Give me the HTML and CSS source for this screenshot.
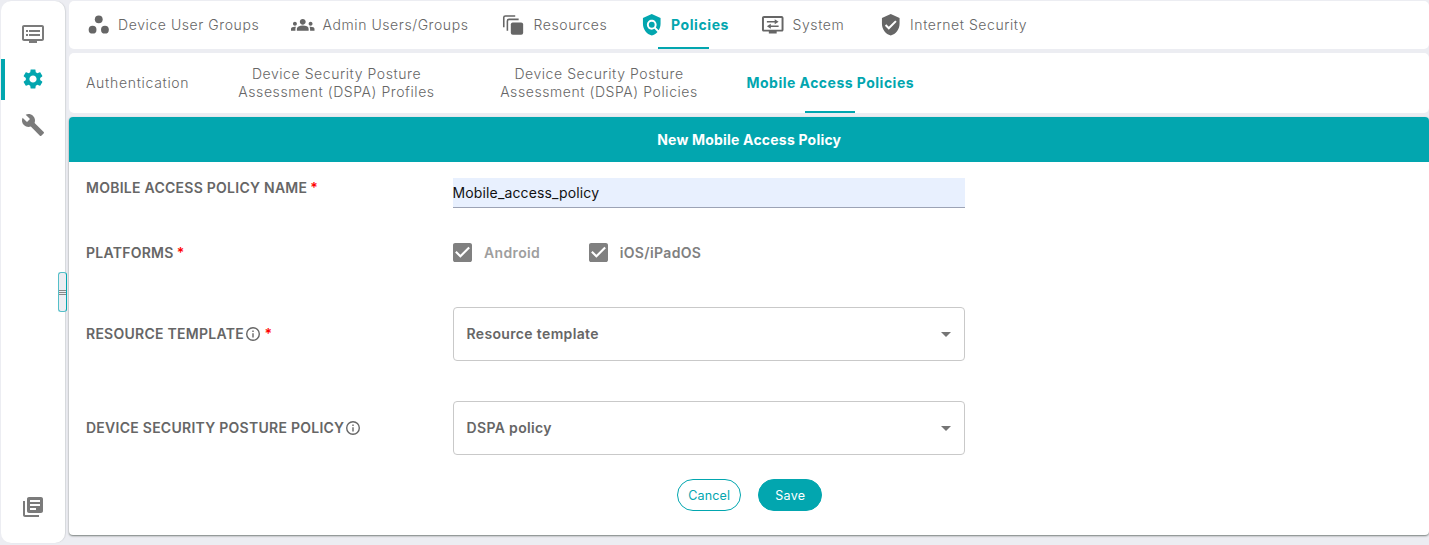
FILE: index.html
```html
<!DOCTYPE html>
<html lang="en">
<head>
<meta charset="utf-8">
<title>Mobile Access Policies</title>
<link rel="stylesheet" href="styles.css">
</head>
<body>
<div class="app">
  <nav class="sidebar">
    <a class="side-item"><svg class="side-icon" viewBox="0 0 24 24"><path d="M21 3H3c-1.1 0-2 .9-2 2v12c0 1.1.9 2 2 2h5v2h8v-2h5c1.1 0 2-.9 2-2V5c0-1.1-.9-2-2-2zm0 14H3V5h18v12zM19 8H8v2h11V8zm0 4H8v2h11v-2zM7 8H5v2h2V8zm0 4H5v2h2v-2z"/></svg></a>
    <a class="side-item side-active"><svg class="side-icon" viewBox="0 0 24 24"><path d="M19.14 12.94c.04-.3.06-.61.06-.94 0-.32-.02-.64-.07-.94l2.03-1.58c.18-.14.23-.41.12-.61l-1.92-3.32c-.12-.22-.37-.29-.59-.22l-2.39.96c-.5-.38-1.03-.7-1.62-.94l-.36-2.54c-.04-.24-.24-.41-.48-.41h-3.84c-.24 0-.43.17-.47.41l-.36 2.54c-.59.24-1.13.57-1.62.94l-2.39-.96c-.22-.08-.47 0-.59.22L2.74 8.87c-.12.21-.08.47.12.61l2.03 1.58c-.05.3-.09.63-.09.94s.02.64.07.94l-2.03 1.58c-.18.14-.23.41-.12.61l1.92 3.32c.12.22.37.29.59.22l2.39-.96c.5.38 1.03.7 1.62.94l.36 2.54c.05.24.24.41.48.41h3.84c.24 0 .44-.17.47-.41l.36-2.54c.59-.24 1.13-.56 1.62-.94l2.39.96c.22.08.47 0 .59-.22l1.92-3.32c.12-.22.07-.47-.12-.61l-2.01-1.58zM12 15.6c-1.98 0-3.6-1.62-3.6-3.6s1.62-3.6 3.6-3.6 3.6 1.62 3.6 3.6-1.62 3.6-3.6 3.6z"/></svg></a>
    <a class="side-item"><svg class="side-icon" viewBox="0 0 24 24"><path d="M22.7 19l-9.1-9.1c.9-2.3.4-5-1.5-6.9-2-2-5-2.4-7.4-1.3L9 6 6 9 1.6 4.7C.4 7.1.9 10.1 2.9 12.1c1.9 1.9 4.6 2.4 6.9 1.5l9.1 9.1c.4.4 1 .4 1.4 0l2.3-2.3c.5-.4.5-1.1.1-1.4z"/></svg></a>
    <a class="side-item side-bottom"><svg class="side-icon" viewBox="0 0 24 24"><path d="M4 6H2v14c0 1.1.9 2 2 2h14v-2H4V6zm16-4H8c-1.100 0-2 .9-2 2v12c0 1.100.9 2 2 2h12c1.100 0 2-.9 2-2V4c0-1.100-.9-2-2-2zm-1 9H9V9h10v2zm-4 4H9v-2h6v2zm4-8H9V5h10v2z"/></svg></a>
    <span class="grip"><i></i><i></i><i></i></span>
  </nav>
  <main class="main">
    <nav class="tabs">
      <a class="tab t1"><svg class="tab-icon" viewBox="0 0 24 24"><circle cx="12" cy="6.500" r="4"/><circle cx="5.700" cy="17" r="4"/><circle cx="18.300" cy="17" r="4"/></svg><span>Device User Groups</span></a>
      <a class="tab t2"><svg class="tab-icon" viewBox="0 0 24 24"><path d="M12 12.750c1.630 0 3.070.39 4.240.9 1.080.48 1.760 1.560 1.760 2.730V18H6v-1.610c0-1.180.68-2.260 1.760-2.730 1.170-.52 2.610-.91 4.240-.91zM4 13c1.100 0 2-.9 2-2s-.9-2-2-2-2 .9-2 2 .9 2 2 2zm1.130 1.100C4.760 14.040 4.390 14 4 14c-.99 0-1.930.21-2.780.58C.48 14.900 0 15.620 0 16.430V18h4.500v-1.610c0-.83.23-1.610.63-2.290zM20 13c1.100 0 2-.9 2-2s-.9-2-2-2-2 .9-2 2 .9 2 2 2zm4 3.430c0-.81-.48-1.530-1.220-1.850-.85-.37-1.790-.58-2.780-.58-.39 0-.76.04-1.130.1.400.68.630 1.460.630 2.290V18H24v-1.570zM12 6c1.660 0 3 1.340 3 3s-1.340 3-3 3-3-1.340-3-3 1.340-3 3-3z"/></svg><span>Admin Users/Groups</span></a>
      <a class="tab t3"><svg class="tab-icon" viewBox="0 0 24 24"><rect x="9" y="9.800" width="12.600" height="12.400" rx="2"/><path d="M5.500 18V8.200c0-1.100.7-1.700 1.700-1.700H17M1.800 14.500V4.700C1.800 3.600 2.500 3 3.500 3h10" fill="none" stroke="currentColor" stroke-width="1.600"/></svg><span>Resources</span></a>
      <a class="tab t4 tab-active"><svg class="tab-icon" viewBox="0 0 24 24"><path d="M21 5l-9-4-9 4v6c0 5.550 3.840 10.740 9 12 2.300-.56 4.330-1.900 5.880-3.710l-3.120-3.120c-1.940 1.290-4.580 1.070-6.290-.64-1.950-1.950-1.950-5.120 0-7.070s5.120-1.950 7.070 0c1.710 1.710 1.920 4.350.64 6.290l2.900 2.900C20.290 15.690 21 13.380 21 11V5z"/><circle cx="12" cy="12" r="3"/></svg><span>Policies</span></a>
      <a class="tab t5"><svg class="tab-icon" viewBox="0 0 24 24"><path d="M21 3H3c-1.100 0-2 .9-2 2v12c0 1.100.9 2 2 2h5v2h8v-2h5c1.100 0 2-.9 2-2V5c0-1.100-.9-2-2-2zm0 14H3V5h18v12zM6 8.250h8V6.500l4 2.500-4 2.500V9.750H6zM18 14.250h-8v1.750l-4-2.500 4-2.500v1.750h8z"/></svg><span>System</span></a>
      <a class="tab t6"><svg class="tab-icon" viewBox="0 0 24 24"><path d="M12 1L3 5v6c0 5.550 3.840 10.740 9 12 5.160-1.260 9-6.450 9-12V5l-9-4zm-2 16l-4-4 1.410-1.410L10 14.170l6.590-6.590L18 9l-8 8z"/></svg><span>Internet Security</span></a>
    </nav>
    <nav class="subtabs">
      <a class="sub s1">Authentication</a>
      <a class="sub s2">Device Security Posture<br>Assessment (DSPA) Profiles</a>
      <a class="sub s3">Device Security Posture<br>Assessment (DSPA) Policies</a>
      <a class="sub s4 sub-active">Mobile Access Policies</a>
    </nav>
    <section class="card">
      <h1 class="card-title">New Mobile Access Policy</h1>
      <form class="form">
        <div class="row row-name"><span class="label l1">MOBILE ACCESS POLICY NAME<b>*</b></span><div class="input">Mobile_access_policy</div></div>
        <div class="row row-platforms"><span class="label">PLATFORMS<b>*</b></span>
          <div class="checks">
            <span class="check disabled"><svg class="box" viewBox="3 3 18 18"><path d="M19 3H5c-1.110 0-2 .9-2 2v14c0 1.100.89 2 2 2h14c1.110 0 2-.9 2-2V5c0-1.100-.89-2-2-2zm-9 14l-5-5 1.410-1.410L10 14.170l7.590-7.590L19 8l-9 9z"/></svg><span>Android</span></span>
            <span class="check"><svg class="box" viewBox="3 3 18 18"><path d="M19 3H5c-1.110 0-2 .9-2 2v14c0 1.100.89 2 2 2h14c1.110 0 2-.9 2-2V5c0-1.100-.89-2-2-2zm-9 14l-5-5 1.410-1.410L10 14.170l7.590-7.590L19 8l-9 9z"/></svg><span>iOS/iPadOS</span></span>
          </div>
        </div>
        <div class="row row-resource"><span class="label">RESOURCE TEMPLATE<svg class="info" viewBox="2 2 20 20"><path d="M11 7h2v2h-2zm0 4h2v6h-2zm1-9a10 10 0 100 20 10 10 0 000-20zm0 18a8 8 0 110-16 8 8 0 010 16z"/></svg><b>*</b></span><div class="select"><span>Resource template</span><i class="caret"></i></div></div>
        <div class="row row-dspa"><span class="label">DEVICE SECURITY POSTURE POLICY<svg class="info" viewBox="2 2 20 20"><path d="M11 7h2v2h-2zm0 4h2v6h-2zm1-9a10 10 0 100 20 10 10 0 000-20zm0 18a8 8 0 110-16 8 8 0 010 16z"/></svg></span><div class="select"><span>DSPA policy</span><i class="caret"></i></div></div>
        <div class="actions"><button type="button" class="btn cancel">Cancel</button><button type="button" class="btn save">Save</button></div>
      </form>
    </section>
  </main>
</div>
</body>
</html>
```
FILE: styles.css
```css
* { box-sizing: border-box; }
body { margin: 0; background: #ecedf2; font-family: Inter, "Liberation Sans", sans-serif; font-size: 14px; color: #666; overflow: hidden; }
svg { fill: currentColor; flex: none; display: block; }
.app { display: flex; height: 545px; padding: 1px 0 0 1px; gap: 4.400px; }

.sidebar { position: relative; width: 64px; height: 542px; flex: none; background: #fff; border-radius: 10px; display: flex; flex-direction: column; padding: 12px 0 16px; box-shadow: 1px 0 1px #d5d7db; color: #7b7b7b; }
.side-item { height: 41px; margin-bottom: 4.500px; display: flex; align-items: center; padding-left: 20px; border-left: 0 solid #02a6af; }
.side-active { color: #02a6af; border-left-width: 4px; padding-left: 16px; }
.side-icon { width: 24px; height: 24px; }
.side-bottom { margin: auto 0 0; }
.grip { position: absolute; left: 56.500px; top: 271px; width: 9px; height: 40px; border: 1px solid #55bfc8; border-right: 1px solid #02a6af; border-radius: 3px; background: #ecedf2; display: flex; flex-direction: column; justify-content: center; gap: 1px; }
.grip i { height: 1px; background: #888; }

.main { flex: 1; min-width: 0; display: flex; flex-direction: column; gap: 4px; }
.tabs, .subtabs { background: #fff; border-radius: 5px; display: flex; position: relative; letter-spacing: .57px; white-space: nowrap; font-weight: 300; }
.tabs { height: 48px; padding-left: 17.200px; }
.tab { display: flex; align-items: center; gap: 8px; height: 47px; position: relative; }
.tab span { margin-top: -1px; }
.tab-icon { width: 23.500px; height: 23.500px; }
.t1 { width: 204.500px; }
.t2 { width: 211px; }
.t3 { width: 137.500px; }
.t4 { width: 121.500px; }
.t5 { width: 117.500px; }
.tab-active, .sub-active { color: #02a6af; font-weight: 700; }
.tab-active::after, .sub-active::after { content: ""; position: absolute; bottom: -1px; width: 50px; height: 2px; background: #02a6af; }
.tab-active::after { left: 18.300px; width: 51px; }

.subtabs { height: 60px; padding-left: 16.600px; align-items: center; }
.sub { line-height: 18px; text-align: center; }
.s1 { width: 152px; text-align: left; letter-spacing: .7px; }
.s2 { width: 197px; }
.s3 { width: 198px; margin-left: 65px; }
.s4 { position: relative; margin-left: 48.500px; height: 60px; line-height: 60px; letter-spacing: .48px; }
.sub-active::after { left: 58.500px; bottom: 0; }

.card { height: 418px; background: #fff; border-radius: 4px; box-shadow: 0 1px 2px #777f7b; overflow: hidden; }
.card-title { margin: 0; height: 45px; line-height: 46px; background: #02a6af; color: #fff; text-align: center; font-size: 14px; font-weight: 700; letter-spacing: .2px; }
.form { padding: .500px 0 0 16.600px; font-weight: 600; }
.row { display: flex; align-items: center; }
.label { width: 367px; padding-bottom: 2px; display: flex; align-items: center; letter-spacing: .26px; white-space: nowrap; }
.label b { color: #f00; font-weight: 600; margin-left: 3px; }
.info { width: 14px; height: 14px; margin: 2px 0 0 2px; }
.row-name { height: 30px; margin-top: 15.500px; }
.l1 { margin-top: -9px; }
.input { width: 512px; height: 30px; line-height: 29px; background: #e8f0fe; border-bottom: 1px solid #9ca3b5; color: #111; font-weight: 400; letter-spacing: .14px; text-indent: -.5px; }
.row-platforms { height: 20px; margin-top: 34.500px; }
.row-platforms .label { padding-bottom: 0; }
.checks { display: flex; gap: 48.500px; }
.check { display: flex; align-items: center; gap: 12px; color: #808080; letter-spacing: .36px; }
.disabled span { color: #9e9e9e; }
.box { width: 19px; height: 19px; color: #808080; }
.row-resource { height: 54px; margin-top: 44.500px; }
.row-resource b { margin-left: 4.500px; }
.row-dspa { height: 54px; margin-top: 40px; }
.select { width: 512px; height: 54px; border: 1px solid #c9c9c9; border-radius: 4px; display: flex; justify-content: space-between; align-items: center; padding: 0 12.500px; letter-spacing: .35px; }
.select span { margin-top: -2px; }
.caret { border: 5px solid transparent; border-top-color: #757575; border-bottom: 0; }
.actions { display: flex; gap: 16.500px; margin: 24px 0 0 591px; }
.btn { width: 64.500px; height: 32px; padding: 0; border: 1.500px solid #02a6af; border-radius: 16px; font: 400 12.500px Inter, sans-serif; letter-spacing: .15px; background: #fff; color: #02a6af; }
.save { background: #02a6af; color: #fff; letter-spacing: .3px; }
```
